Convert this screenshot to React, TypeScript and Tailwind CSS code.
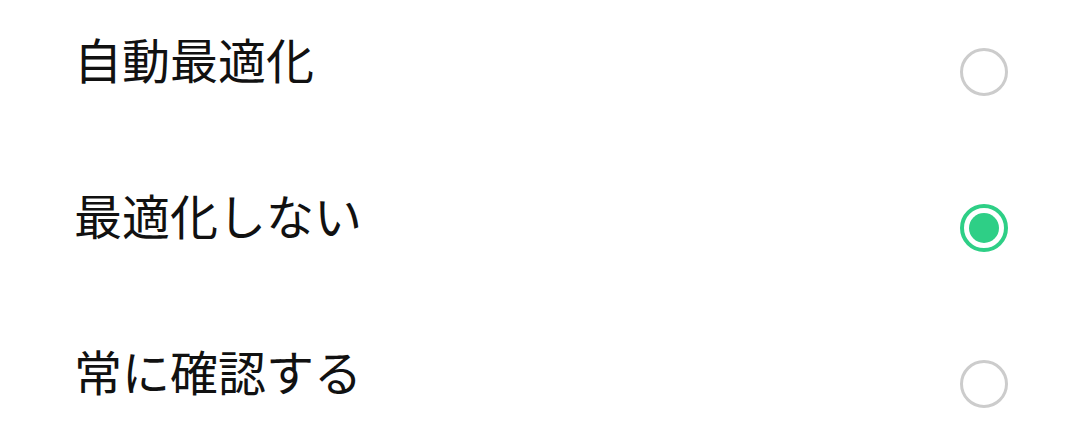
import { useState } from 'react'

const options = ['自動最適化', '最適化しない', '常に確認する']

export default function App() {
  const [selected, setSelected] = useState(1)

  return (
    <div className="h-[448px] w-[1080px] overflow-hidden bg-white font-['Noto_Sans_CJK_JP','Noto_Sans',sans-serif]">
      <div className="-mt-[6px] flex flex-col">
        {options.map((label, i) => (
          <button
            key={label}
            type="button"
            onClick={() => setSelected(i)}
            className="flex h-[156px] items-center justify-between pl-[74px] pr-[72px] text-left"
          >
            <span className="pb-[28px] text-[48px] leading-none text-[#111111]">
              {label}
            </span>
            {selected === i ? (
              <span className="flex h-12 w-12 items-center justify-center rounded-full border-4 border-[#2ecf86]">
                <span className="h-[30px] w-[30px] rounded-full bg-[#2ecf86]" />
              </span>
            ) : (
              <span className="h-12 w-12 rounded-full border-[3px] border-[#cccccc]" />
            )}
          </button>
        ))}
      </div>
    </div>
  )
}
